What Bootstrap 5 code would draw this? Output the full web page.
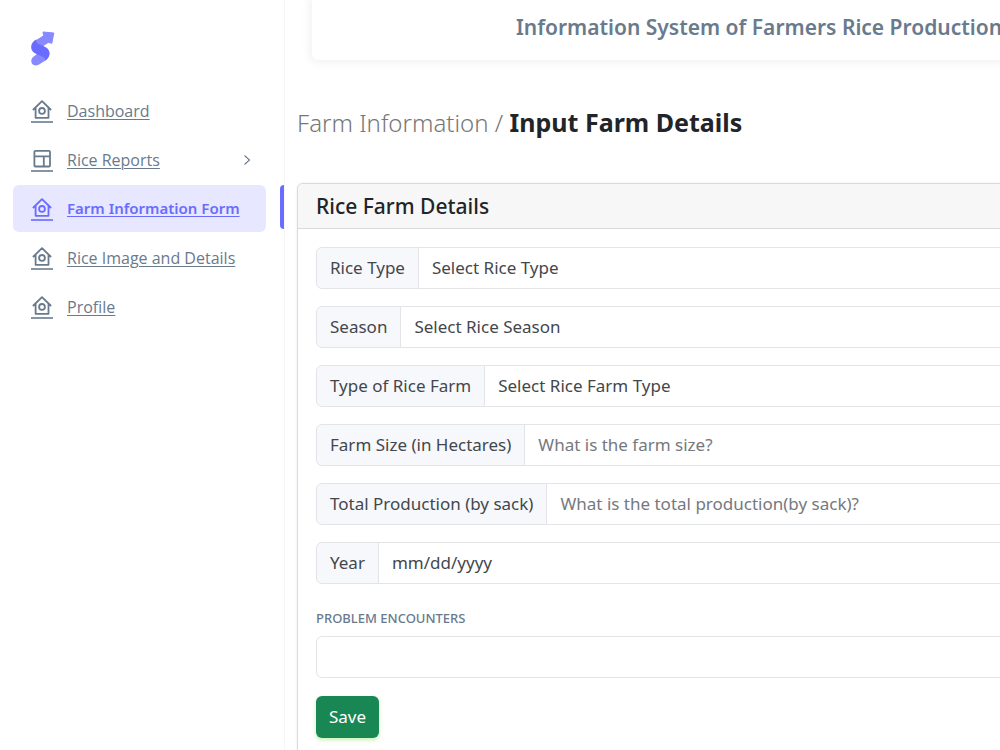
<!DOCTYPE html>
<html lang="en">
<head>
<meta charset="utf-8">
<meta name="viewport" content="width=device-width, initial-scale=1">
<title>Input Farm Details</title>
<link href="https://cdn.jsdelivr.net/npm/bootstrap@5.3.0/dist/css/bootstrap.min.css" rel="stylesheet">
<style>
  body { font-family: "Noto Sans", "Open Sans", sans-serif; font-size: 17px; color: #212529; background: #fff; }
  .shell { min-height: 100vh; overflow: hidden; }
  .sidebar { flex: 0 0 285px; border-right: 1px solid #f7f7f9; padding: 31px 18px 0 13px; }
  .brand { margin: 0 0 21px 18px; line-height: 0; }
  .menu { gap: 2px; }
  .menu-row { height: 47px; padding: 0 14px 0 18px; gap: 14px; border-radius: 6px; color: #697a8d; font-family: "Open Sans", "Noto Sans", sans-serif; font-size: 16px; }
  .menu-row.active { background: #e7e7ff; color: #696cff; font-family: "Noto Sans", "Open Sans", sans-serif; font-size: 15px; font-weight: 600; }
  .menu-row span { text-decoration: underline; text-decoration-thickness: 1px; text-underline-offset: 2px; }
  .menu-item-current { position: relative; }
  .menu-item-current::after { content: ""; position: absolute; right: -18px; top: 0; width: 4px; height: 44px; background: #696cff; border-radius: 4px 0 0 4px; }
  .content { min-width: 0; overflow: hidden; padding-left: 12px; }
  /* the page body runs on past the right edge of the window */
  .content-wide { margin-right: -60px; }
  .topbar { height: 60px; margin-left: 15px; padding-left: 204px; border-radius: 0 0 6px 6px; box-shadow: 0 0 8px 2px rgba(105,122,141,.11); color: #697a8d; font-size: 21px; font-weight: 600; white-space: nowrap; }
  .topbar-text { line-height: 54px; }
  .crumb { margin: 45px 0 43px; font-size: 25px; line-height: 35px; font-weight: 700; }
  .crumb span { font-size: 24px; font-weight: 300; color: #777; }
  .panel { border-color: #d9dadc; border-radius: 6px; box-shadow: 0 0 3px rgba(0,0,0,.08); }
  .panel-head { height: 45px; padding: 0 18px; background: #f7f7f7; border-bottom: 1px solid #d9dadc; border-radius: 6px 6px 0 0; }
  .panel-head h1 { font-size: 21px; line-height: 44px; margin: 0; font-weight: 500; }
  .panel-body { padding: 18px; }
  .field, .note, .save { height: 42px; }
  .field { margin-bottom: 17px; }
  .field > *, .note { font-size: 17px; border-color: #e2e4e8; border-radius: 6px; color: #43474c; padding: 0 13px; }
  .field .input-group-text { background: #f7f8fb; }
  .field .form-control::placeholder { color: #75797e; opacity: 1; }
  .note-label { font-size: 13px; line-height: 18px; color: #697a8d; font-weight: 500; margin: 0 0 9px; padding-top: 8px; }
  .note { resize: none; margin-bottom: 18px; overflow: hidden; }
  .save { background: #198754; border: 0; border-radius: 6px; color: #fff; padding: 0 13px; font-size: 17px; box-shadow: 0 2px 4px rgba(113,221,55,.4); }
</style>
</head>
<body>
<svg class="d-none" aria-hidden="true">
  <symbol id="i-home" viewBox="0 0 22 24"><g fill="none" stroke="currentColor" stroke-width="1.8" stroke-linejoin="round"><path d="M1.9 11 11 2.1 20.1 11M4.6 9v9.8h12.9V9"/><circle cx="11" cy="11.9" r="2.9"/><path d="M0 23h22" stroke-width="1.6"/></g></symbol>
  <symbol id="i-grid" viewBox="0 0 22 24"><g fill="none" stroke="currentColor" stroke-width="1.8" stroke-linejoin="round"><rect x="3.4" y="2.9" width="15.6" height="15.6" rx="1"/><path d="M3.4 8.3H19M12.8 8.3v10.2"/><path d="M0 23h22" stroke-width="1.6"/></g></symbol>
</svg>
<div class="shell d-flex">
  <aside class="sidebar">
    <div class="brand">
      <svg width="24" height="35" viewBox="0 0 24 35" role="img" aria-label="Logo">
        <path fill="#8789ff" stroke="#8789ff" stroke-linejoin="round" d="M12 1 22.8 2 20.8 12.2 17.2 11.5 10.5 15.5 3 11 12.6 4.8Z"/>
        <path fill="#8789ff" d="M7 22 3.5 25C-.8 27.5-.3 32 2.3 33.8 4.3 35 6.8 34.5 8.5 33.3L15 29Q18.5 26.2 18.4 22L10 20Z"/>
        <path fill="#696cff" d="M5.6 8.3C-.8 11.5-1.6 18.6 3.4 22L12.6 26.2Q14.8 27.2 13.6 30C19 27 20.2 20.5 16 17L11.5 14.6C8 13.4 6.8 13 5.8 11.6Q4.6 10 5.6 8.3Z"/>
      </svg>
    </div>
    <nav>
      <ul class="menu list-unstyled d-flex flex-column mb-0">
        <li><a href="#" class="menu-row d-flex align-items-center text-decoration-none"><svg width="22" height="24"><use href="#i-home"/></svg><span>Dashboard</span></a></li>
        <li><a href="#" class="menu-row d-flex align-items-center text-decoration-none"><svg width="22" height="24"><use href="#i-grid"/></svg><span>Rice Reports</span><svg class="ms-auto" width="10" height="12" viewBox="0 0 10 12" fill="none" stroke="currentColor" stroke-width="1.1"><path d="M2.5 1.5 7.5 6 2.5 10.5"/></svg></a></li>
        <li class="menu-item-current"><a href="#" class="menu-row active d-flex align-items-center text-decoration-none" aria-current="page"><svg width="22" height="24"><use href="#i-home"/></svg><span>Farm Information Form</span></a></li>
        <li><a href="#" class="menu-row d-flex align-items-center text-decoration-none"><svg width="22" height="24"><use href="#i-home"/></svg><span>Rice Image and Details</span></a></li>
        <li><a href="#" class="menu-row d-flex align-items-center text-decoration-none"><svg width="22" height="24"><use href="#i-home"/></svg><span>Profile</span></a></li>
      </ul>
    </nav>
  </aside>
  <main class="content flex-grow-1">
    <div class="content-wide">
      <header class="topbar"><div class="topbar-text">Information System of Farmers Rice Production</div></header>
      <h4 class="crumb"><span>Farm Information /</span> Input Farm Details</h4>
      <section class="panel card">
        <div class="panel-head"><h1>Rice Farm Details</h1></div>
        <form class="panel-body">
          <div class="field input-group"><label class="input-group-text" for="rice">Rice Type</label><select class="form-select" id="rice"><option>Select Rice Type</option></select></div>
          <div class="field input-group"><label class="input-group-text" for="season">Season</label><select class="form-select" id="season"><option>Select Rice Season</option></select></div>
          <div class="field input-group"><label class="input-group-text" for="farm">Type of Rice Farm</label><select class="form-select" id="farm"><option>Select Rice Farm Type</option></select></div>
          <div class="field input-group"><label class="input-group-text" for="size">Farm Size (in Hectares)</label><input class="form-control" id="size" type="text" placeholder="What is the farm size?"></div>
          <div class="field input-group"><label class="input-group-text" for="total">Total Production (by sack)</label><input class="form-control" id="total" type="text" placeholder="What is the total production(by sack)?"></div>
          <div class="field input-group"><label class="input-group-text" for="year">Year</label><input class="form-control" id="year" type="date"></div>
          <label class="note-label d-block text-uppercase" for="note">Problem Encounters</label>
          <textarea class="note form-control" id="note" rows="1"></textarea>
          <button type="button" class="save btn">Save</button>
        </form>
      </section>
    </div>
  </main>
</div>
<script src="https://cdn.jsdelivr.net/npm/bootstrap@5.3.0/dist/js/bootstrap.bundle.min.js"></script>
</body>
</html>
